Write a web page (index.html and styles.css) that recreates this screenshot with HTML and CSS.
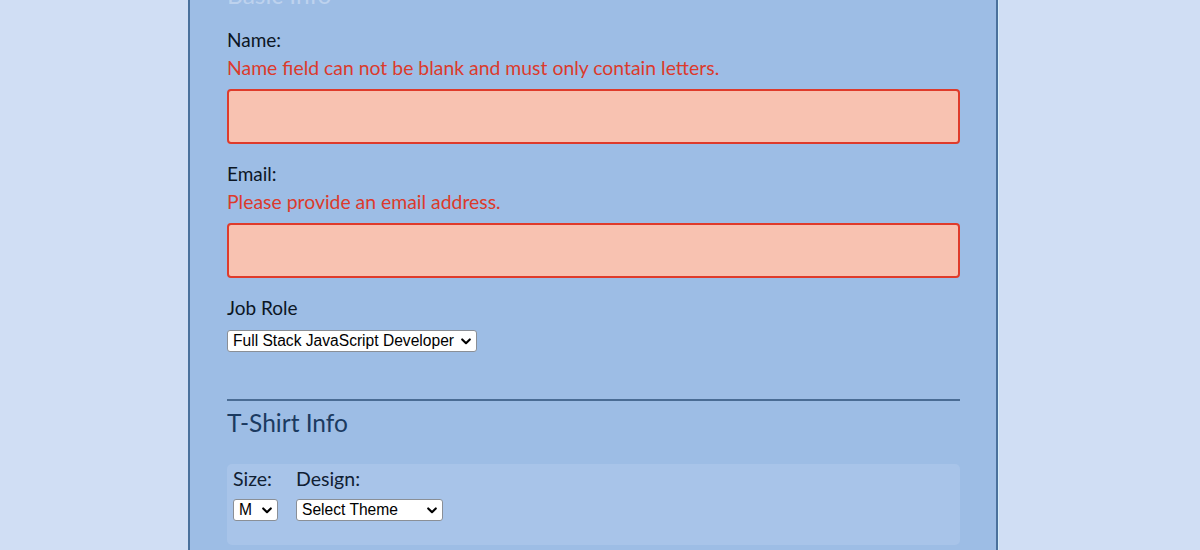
FILE: index.html
```html
<!DOCTYPE html>
<html lang="en">
<head>
<meta charset="utf-8">
<title>Registration</title>
<link rel="stylesheet" href="styles.css">
</head>
<body>
<div class="page">
  <form class="panel">
    <section class="basic">
      <h2 class="section-title section-title--light">Basic Info</h2>

      <label class="field-label" for="name">Name:</label>
      <p class="field-error">Name field can not be blank and must only contain letters.</p>
      <input class="text-input text-input--error" id="name" type="text">

      <label class="field-label field-label--spaced" for="mail">Email:</label>
      <p class="field-error">Please provide an email address.</p>
      <input class="text-input text-input--error" id="mail" type="email">

      <label class="field-label field-label--spaced" for="title">Job Role</label>
      <div class="select-wrap select-wrap--job">
        <select class="select" id="title">
          <option>Full Stack JavaScript Developer</option>
        </select>
        <svg class="chevron" viewBox="0 0 10 7" aria-hidden="true"><path d="M1.2 1.4 L5 5.2 L8.8 1.4" fill="none" stroke="#000" stroke-width="2.1" stroke-linecap="round" stroke-linejoin="round"/></svg>
      </div>
    </section>

    <hr class="divider">

    <section class="shirt">
      <h2 class="section-title">T-Shirt Info</h2>
      <div class="shirt-box">
        <div class="shirt-col">
          <label class="small-label" for="size">Size:</label>
          <div class="select-wrap select-wrap--size">
            <select class="select" id="size"><option>M</option></select>
            <svg class="chevron" viewBox="0 0 10 7" aria-hidden="true"><path d="M1.2 1.4 L5 5.2 L8.8 1.4" fill="none" stroke="#000" stroke-width="2.1" stroke-linecap="round" stroke-linejoin="round"/></svg>
          </div>
        </div>
        <div class="shirt-col">
          <label class="small-label" for="design">Design:</label>
          <div class="select-wrap select-wrap--design">
            <select class="select" id="design"><option>Select Theme</option></select>
            <svg class="chevron" viewBox="0 0 10 7" aria-hidden="true"><path d="M1.2 1.4 L5 5.2 L8.8 1.4" fill="none" stroke="#000" stroke-width="2.1" stroke-linecap="round" stroke-linejoin="round"/></svg>
          </div>
        </div>
      </div>
    </section>
  </form>
</div>
</body>
</html>
```

FILE: styles.css
```css
* { box-sizing: border-box; }

html, body {
  margin: 0;
  padding: 0;
  background: #d0def4;
  height: 100%;
  overflow: hidden;
}

body {
  font-family: Lato, "Noto Sans", sans-serif;
  color: #0f1b2b;
}

.page {
  padding-left: 188px;
}

.panel {
  width: 810px;
  min-height: 700px;
  margin-top: -20px;
  background: #9dbde5;
  border-left: 2px solid #4a719c;
  border-right: 2px solid #4a719c;
  box-shadow: 1px 0 0 #d7eefa;
  padding: 0 36px 0 37px;
  display: flex;
  flex-direction: column;
}

.basic {
  display: flex;
  flex-direction: column;
  align-items: flex-start;
}

.section-title {
  margin: 0;
  font-size: 24.5px;
  line-height: 30px;
  font-weight: 400;
  color: #1b3a60;
}

.section-title--light {
  color: #bdd2ee;
  margin-bottom: 16px;
}

.field-label {
  font-size: 19px;
  line-height: 28px;
  color: #0c1624;
}

.field-label--spaced {
  margin-top: 16px;
}

.field-error {
  margin: 0;
  font-size: 19.4px;
  line-height: 28px;
  color: #dc3a2c;
}

.text-input {
  width: 100%;
  height: 55px;
  margin-top: 7px;
  border-radius: 4px;
  font-size: 18px;
  padding: 0 10px;
  outline: none;
}

.text-input--error {
  background: #f8c2b1;
  border: 2px solid #df3b2b;
}

.select-wrap {
  position: relative;
  display: inline-flex;
}

.select-wrap--job { width: 250px; margin-top: 8px; }
.select-wrap--size { width: 45px; }
.select-wrap--design { width: 147px; }

.select {
  -webkit-appearance: none;
  appearance: none;
  width: 100%;
  height: 22px;
  margin: 0;
  padding: 0 17px 0 5px;
  font-family: "Liberation Sans", Arial, sans-serif;
  font-size: 15.6px;
  line-height: 20px;
  color: #000;
  background: #fff;
  border: 1px solid #8a8f96;
  border-radius: 3px;
}

.chevron {
  position: absolute;
  right: 6px;
  top: 8px;
  width: 10px;
  height: 7px;
  pointer-events: none;
}

.divider {
  margin: 47px 0 0;
  height: 2px;
  border: 0;
  background: #4a6c94;
}

.shirt-box .select-wrap { margin-top: 9px; }

.shirt .section-title {
  margin-top: 7px;
}

.shirt-box {
  margin-top: 26px;
  background: #a8c4e9;
  border-radius: 5px;
  padding: 4px 6px 24px;
  display: flex;
  gap: 18px;
}

.shirt-col {
  display: flex;
  flex-direction: column;
  align-items: flex-start;
}

.small-label {
  font-size: 19.5px;
  line-height: 22px;
  color: #102033;
}
```
